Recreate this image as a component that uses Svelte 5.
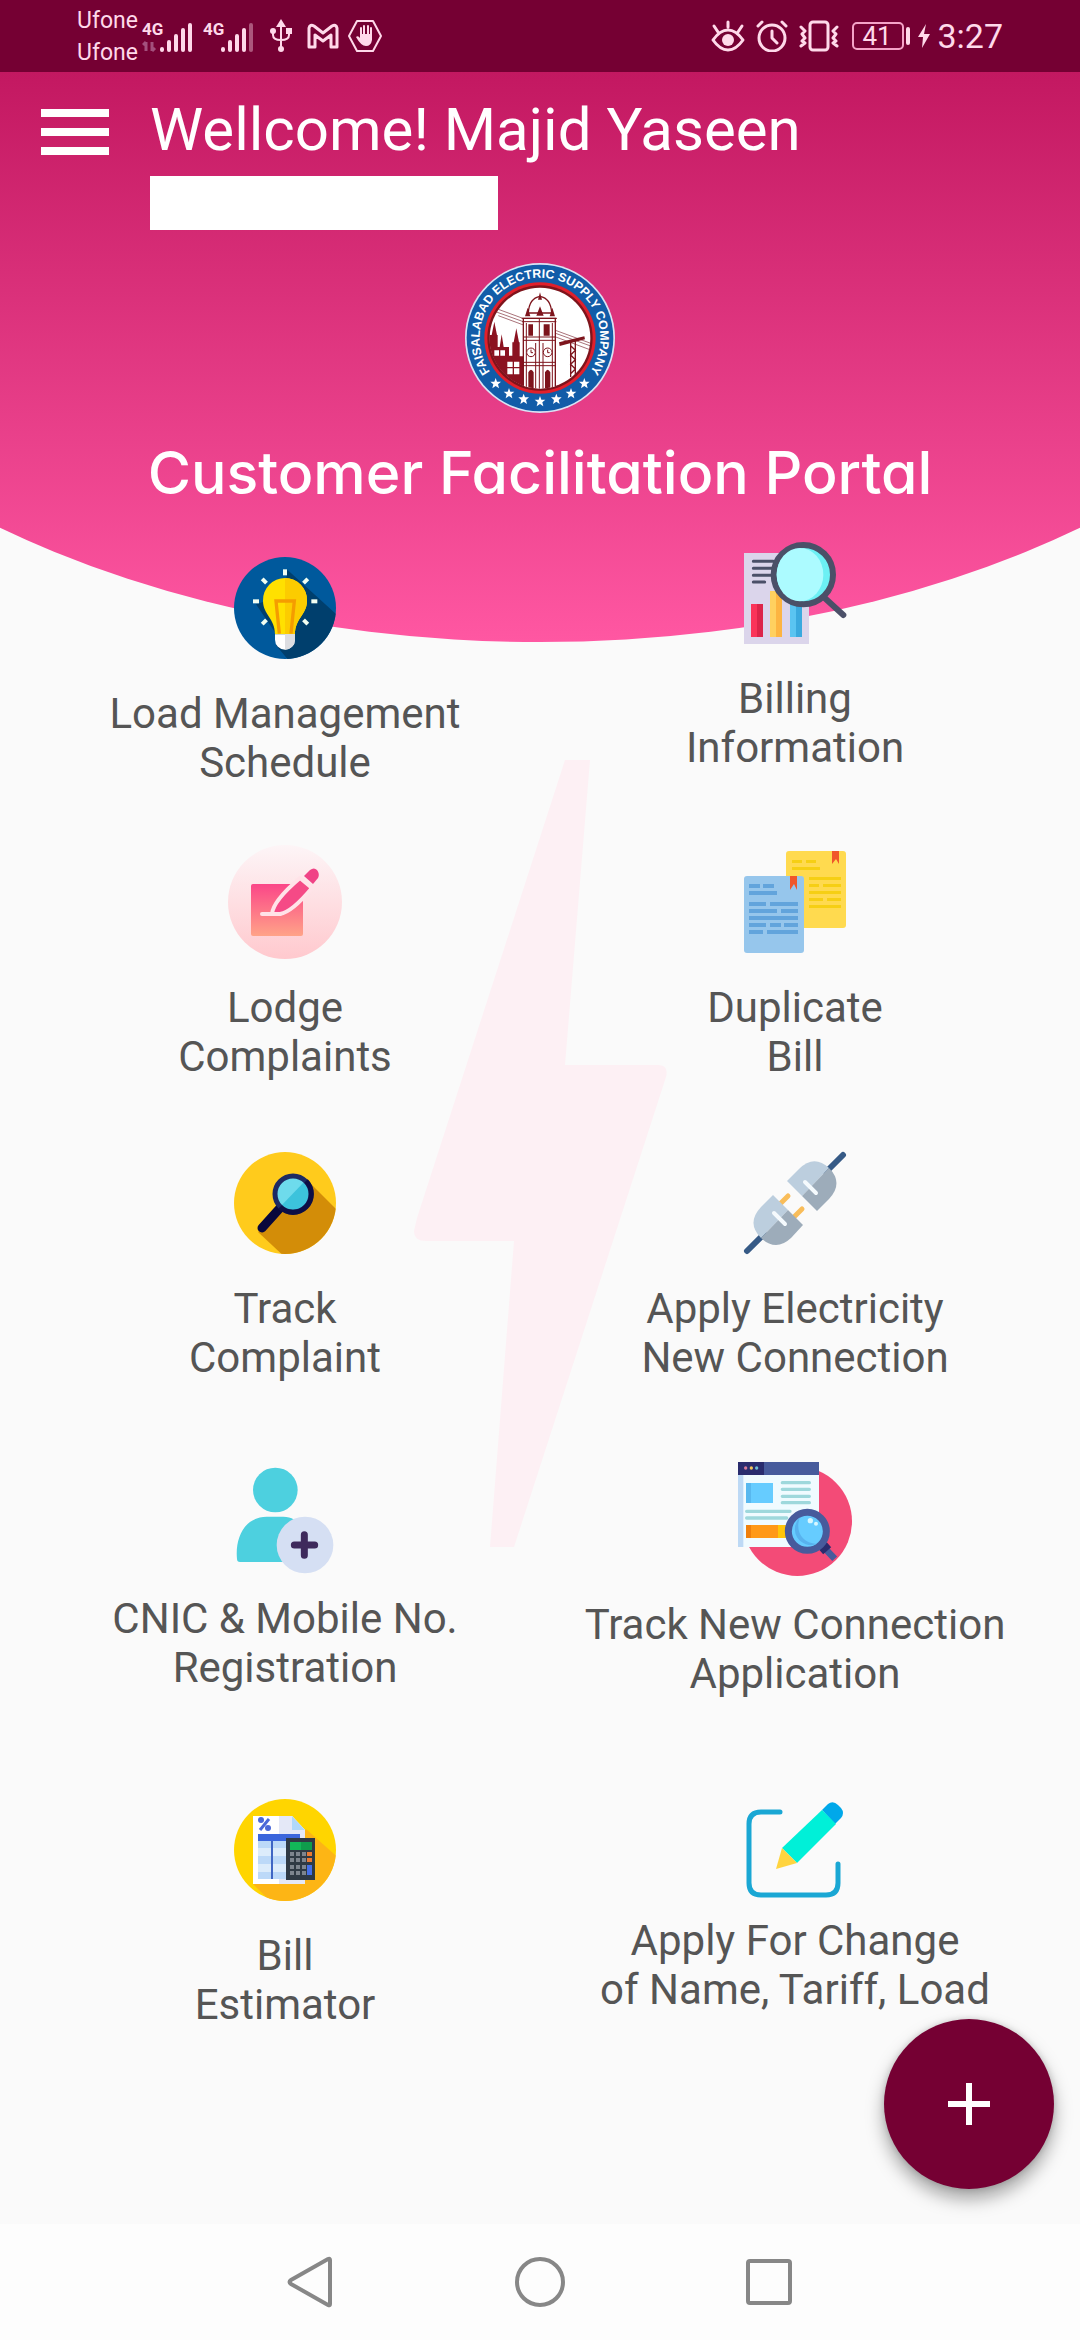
<script>
  const services = [
    { icon: 'bulb', label: 'Load Management\nSchedule', mod: 'lowered' },
    { icon: 'report', label: 'Billing\nInformation' },
    { icon: 'note', label: 'Lodge\nComplaints' },
    { icon: 'copies', label: 'Duplicate\nBill' },
    { icon: 'search', label: 'Track\nComplaint' },
    { icon: 'plug', label: 'Apply Electricity\nNew Connection' },
    { icon: 'person', label: 'CNIC & Mobile No.\nRegistration', mod: 'snug' },
    { icon: 'webpage', label: 'Track New Connection\nApplication' },
    { icon: 'calc', label: 'Bill\nEstimator' },
    { icon: 'pencil', label: 'Apply For Change\nof Name, Tariff, Load', mod: 'tight' }
  ];

  const viewBoxes = {
    bulb: '84 62 342 342',
    report: '54 48 342 342',
    person: '84 66 342 342',
    webpage: '84 66 342 342'
  };

  // Rays round the bulb: x, y, rotation
  const rays = [
    [255, 126, 0], [317, 152, 45], [343, 213, 90], [317, 275, 135],
    [193, 275, 45], [168, 213, 90], [193, 152, 135]
  ];

  // Text bars on the two documents: x, y, width
  const blueBars = [
    [11, 39, 11], [25, 39, 11], [11, 46, 28], [11, 57, 17], [32, 57, 28], [11, 64, 28], [43, 64, 17],
    [11, 71, 49], [11, 78, 17], [32, 78, 11], [46, 78, 14], [11, 85, 14], [29, 85, 31]
  ];
  const yellowBars = [
    [54, 15, 10], [68, 15, 10], [54, 22, 28], [71, 32, 32], [71, 39, 10], [85, 39, 18],
    [71, 46, 32], [71, 53, 14], [89, 53, 14], [71, 60, 32]
  ];

  const keyColumns = [62, 68, 74];
  const keyRows = [59, 65, 72, 78];

  // Stars along the lower arc of the emblem
  const stars = [46, 61, 75, 90, 105, 119, 134].map((deg) => {
    const a = (deg * Math.PI) / 180;
    return { x: Math.round(225 + 191 * Math.cos(a)), y: Math.round(225 + 191 * Math.sin(a)) };
  });
</script>

<div class="screen">
  <div class="backdrop" aria-hidden="true"></div>
  <svg class="watermark" viewBox="0 0 256 788" aria-hidden="true">
    <path d="M151 0h25L151 305h93q11 0 8 12L100 787H76L100 481H12q-12 0-12-10l3-13z" fill="#fdf0f4" />
  </svg>

  <div class="status">
    <div class="carriers"><span>Ufone</span><span>Ufone</span></div>
    <svg class="sig" width="50" height="36" viewBox="0 0 50 36">
      <text x="0" y="17" class="net">4G</text>
      <path d="M4 33V24M1 27l3-3M10 24v9M13 30l-3 3" stroke="#a3507d" stroke-width="3" fill="none" />
      <path d="M20 32v-1M27 32v-8M34 32V18M41 32V12M48 32V7" class="bars" />
    </svg>
    <svg class="sig second" width="50" height="36" viewBox="0 0 50 36">
      <text x="0" y="17" class="net">4G</text>
      <path d="M20 32v-1M27 32v-8M34 32V18M41 32V12" class="bars" />
      <path d="M48 32V7" class="bars" opacity=".4" />
    </svg>
    <svg class="usb" width="22" height="34" viewBox="0 0 22 34">
      <path d="M11 5v25M3 12v4q0 5 8 5M19 12v4q0 5-8 5" fill="none" stroke="#ffd9ea" stroke-width="2" />
      <path d="M11 0l5 8H6z" fill="#ffd9ea" />
      <circle cx="11" cy="30" r="3" fill="#ffd9ea" /><circle cx="3" cy="12" r="3" fill="#ffd9ea" />
      <path d="M16 9h6v6h-6z" fill="#ffd9ea" />
    </svg>
    <svg class="mail" width="32" height="26" viewBox="0 0 32 26">
      <path d="M2 24V5q1-4 5-2l9 7 9-7q4-2 5 2v19h-6V12l-8 6-8-6v12z" fill="none" stroke="#ffd9ea" stroke-width="3" stroke-linejoin="round" />
    </svg>
    <svg class="hex" width="34" height="34" viewBox="0 0 34 34">
      <path d="M9 2h16l8 15-8 15H9L1 17z" fill="none" stroke="#ffd9ea" stroke-width="2" stroke-linejoin="round" />
      <path d="M13 17V9M16 17V7M20 17V7M23 18V9" stroke="#ffd9ea" stroke-width="2" stroke-linecap="round" />
      <path d="M12 15h12v6q-1 6-6 6-5 0-10-9 2-2 4 1z" fill="#ffd9ea" />
    </svg>

    <div class="right">
      <svg width="34" height="32" viewBox="0 0 34 32" class="line">
        <path d="M2 20q7-10 15-10t15 10q-7 10-15 10T2 20zM17 7V2M7 12L3 6M27 12l4-6" />
        <circle cx="17" cy="20" r="6" fill="#ffd9ea" stroke="none" />
      </svg>
      <svg width="32" height="32" viewBox="0 0 32 32" class="line">
        <circle cx="16" cy="18" r="13" /><path d="M16 11v7l5 5M2 6l4-4M30 6l-4-4" />
      </svg>
      <svg width="40" height="34" viewBox="0 0 40 34" class="line">
        <rect x="11" y="3" width="18" height="28" rx="3" />
        <path d="M2 8l4 4-3 3 3 4-3 3 3 2-4 3M38 8l-4 4 3 3-3 4 3 3-3 2 4 3" />
      </svg>
      <svg class="battery" width="78" height="30" viewBox="0 0 78 30">
        <rect x="1" y="2" width="50" height="26" rx="4" fill="none" stroke="#f5a3c8" stroke-width="2" />
        <path d="M56 8v14" stroke="#ffd9ea" stroke-width="4" stroke-linecap="round" />
        <path d="M74 3l-8 13h5l-1 11 8-14h-6z" fill="#ffd9ea" />
        <text x="25" y="24" text-anchor="middle" class="level">41</text>
      </svg>
      <time>3:27</time>
    </div>
  </div>

  <header>
    <div class="welcome">
      <button class="menu" aria-label="Open menu"><i></i><i></i><i></i></button>
      <div class="user">
        <p>Wellcome! Majid Yaseen</p>
        <div class="redacted"></div>
      </div>
    </div>

    <svg class="emblem" viewBox="0 0 450 450" role="img" aria-label="Faisalabad Electric Supply Company">
      <defs>
        <path id="ring" d="M79 332A181 181 0 1 1 371 332" />
        <clipPath id="disc"><circle cx="225" cy="225" r="152" /></clipPath>
      </defs>
      <circle cx="225" cy="225" r="225" fill="#d9e4f5" />
      <circle cx="225" cy="225" r="220" fill="#125ca8" />
      <circle cx="225" cy="225" r="167" fill="#e0202c" />
      <circle cx="225" cy="225" r="158" fill="#7d141c" />
      <circle cx="225" cy="225" r="151" fill="#fff" />
      <g clip-path="url(#disc)">
        <path d="M92 136L380 242M100 158L380 262M75 140L380 250" stroke="#7d2a35" stroke-width="2" fill="none" />
        <path d="M72 340V216h8l8-40 8 40h2v36h6l6-38 6 38h16v26h10v-40h4l8-42 8 42h2v42h22v110H80z" fill="#8b1220" />
        <path d="M88 262h14v16H88zM106 262h14v16h-14zM127 296h16v16h-16zM147 296h16v16h-16zM127 316h16v18h-16zM147 316h16v18h-16z" fill="#fff" />
        <path d="M175 380V166h96v214z" fill="#fff" stroke="#7d141c" stroke-width="4" />
        <path d="M190 150q2-44 35-50 33 6 35 50z" fill="#fff" stroke="#7d141c" stroke-width="4" />
        <path d="M225 88l-6 22h12zM188 134l-8 26h16zM262 134l-8 26h16zM225 130l-11 28h22z" fill="#7d141c" />
        <path d="M170 166h106M172 176h102M175 222h96M175 232h96M175 298h96M175 308h96M223 166v214M184 180v200M212 240v140M234 240v140M262 180v200" stroke="#7d141c" stroke-width="3" fill="none" />
        <path d="M190 184h14v34h-14zM236 184h18v34h-18zM190 328q8-16 16 0v50h-16zM240 328q8-16 16 0v50h-16z" fill="#7d141c" />
        <circle cx="198" cy="268" r="13" fill="#fff" stroke="#7d141c" stroke-width="3" />
        <circle cx="248" cy="268" r="13" fill="#fff" stroke="#7d141c" stroke-width="3" />
        <path d="M198 260v9h6M248 260v9h6" stroke="#7d141c" stroke-width="3" fill="none" />
        <path d="M282 238l76-18 2 9-76 20z" fill="#7d141c" />
        <path d="M317 236v106M331 232v110M317 248l14 14-14 14 14 14-14 14 14 14-14 14" stroke="#7d141c" stroke-width="4" fill="none" />
      </g>
      <text class="ring-text"><textPath href="#ring" startOffset="50%" text-anchor="middle">FAISALABAD ELECTRIC SUPPLY COMPANY</textPath></text>
      {#each stars as s}
        <path transform="translate({s.x} {s.y})" d="M0-17L4-6 16-6 7 2 10 14 0 7-10 14-7 2-16-6-4-6z" fill="#fff" />
      {/each}
    </svg>

    <h1>Customer Facilitation Portal</h1>
  </header>

  <main>
    {#each services as s}
      <button class="tile {s.mod ?? ''}">
        <svg class="icon" viewBox={viewBoxes[s.icon] ?? '0 0 114 114'} aria-hidden="true">
          {#if s.icon === 'bulb'}
            <defs><clipPath id="bulbDisc"><circle cx="255" cy="233" r="153" /></clipPath></defs>
            <circle cx="255" cy="233" r="153" fill="#00599c" />
            <g clip-path="url(#bulbDisc)" fill="#003f6d">
              <path d="M262 118l156 142v135H270l-42-50V310l-60-88 30-10 60-60z" />
            </g>
            <path d="M255 143a66 66 0 0 1 66 68c0 42-36 52-36 101h-60c0-49-36-59-36-101a66 66 0 0 1 66-68z" fill="#ffe000" />
            <path d="M255 143a66 66 0 0 1 66 68c0 42-36 52-36 101h-30z" fill="#fccc00" />
            <path d="M238 310l-10-98h55l-10 98" fill="none" stroke="#f59c00" stroke-width="10" />
            <path d="M225 312h60v16a30 30 0 0 1-60 0z" fill="#fff" />
            <path d="M255 312h30v16a30 30 0 0 1-30 30z" fill="#dcdde1" />
            {#each rays as [x, y, r]}
              <rect x="-6" y="-9" width="12" height="18" fill="#f2fff2" transform="translate({x} {y}) rotate({r})" />
            {/each}
          {:else if s.icon === 'report'}
            <path d="M72 99h195v273H72z" fill="#dbd5eb" />
            <path d="M100 124h60M100 145h60M100 166h60M100 186h34" stroke="#4b5068" stroke-width="9" stroke-linecap="round" />
            <path d="M93 252h36v99H93z" fill="#fa3459" /><path d="M111 252h18v99h-18z" fill="#dc2549" />
            <path d="M150 213h36v138h-36z" fill="#ffd05f" /><path d="M168 213h18v138h-18z" fill="#fdb441" />
            <path d="M210 240h36v111h-36z" fill="#5ac4f1" /><path d="M228 240h18v111h-18z" fill="#3aa9de" />
            <path d="M315 235l55 50" stroke="#4b5068" stroke-width="18" stroke-linecap="round" />
            <circle cx="250" cy="164" r="89" fill="#6cf0f4" stroke="#4b5068" stroke-width="18" />
            <ellipse cx="240" cy="164" rx="70" ry="80" fill="#acfbff" />
          {:else if s.icon === 'note'}
            <defs>
              <linearGradient id="noteBg" x1="0" y1="0" x2="0" y2="1"><stop offset="0" stop-color="#fdf5f7" /><stop offset="1" stop-color="#ffc9ce" /></linearGradient>
              <linearGradient id="notePaper" x1="0" y1="0" x2="0" y2="1"><stop offset="0" stop-color="#fb4688" /><stop offset="1" stop-color="#ffa388" /></linearGradient>
            </defs>
            <circle cx="57" cy="57" r="57" fill="url(#noteBg)" />
            <rect x="23" y="39" width="52" height="52" rx="2" fill="url(#notePaper)" />
            <path d="M44 69Q45 56 72 33L84 43Q64 67 52 69z" fill="#f54a86" stroke="#ffe3e8" stroke-width="4" stroke-linejoin="round" />
            <path d="M34 69h18" stroke="#ffe3e8" stroke-width="4" stroke-linecap="round" />
            <path d="M76 31l6-6q4-3 7 0 3 4 1 8l-5 6z" fill="#f04386" />
          {:else if s.icon === 'copies'}
            <rect x="48" y="6" width="60" height="77" rx="3" fill="#ffda4f" />
            {#each yellowBars as [x, y, w]}<rect {x} {y} width={w} height="3" fill="#f6cf14" />{/each}
            <path d="M94 6h7v13l-3-5-4 5z" fill="#f0562a" />
            <rect x="6" y="31" width="60" height="77" rx="3" fill="#96c6ec" />
            {#each blueBars as [x, y, w]}<rect {x} {y} width={w} height="4" fill="#62a4dc" />{/each}
            <path d="M52 31h7v14l-3-6-4 6z" fill="#f0562a" />
          {:else if s.icon === 'search'}
            <defs><clipPath id="searchDisc"><circle cx="57" cy="57" r="51" /></clipPath></defs>
            <circle cx="57" cy="57" r="51" fill="#ffcb1c" />
            <path d="M80 35l34 34v45H60L30 86z" fill="#d38d08" clip-path="url(#searchDisc)" />
            <path d="M52 62L34 82" stroke="#08083c" stroke-width="9" stroke-linecap="round" />
            <circle cx="65" cy="48" r="18" fill="#6edbec" />
            <path d="M77 35A18 18 0 1 1 52 61z" fill="#3cc3dc" />
            <circle cx="65" cy="48" r="18" fill="none" stroke="#1d2a63" stroke-width="5" />
            <path d="M78 35A18 18 0 0 1 52 61" fill="none" stroke="#0d0e45" stroke-width="5" />
          {:else if s.icon === 'plug'}
            <path d="M105 9L88 26M9 105l17-17" stroke="#365a86" stroke-width="6" stroke-linecap="round" />
            <path d="M50 50l-9 9M64 63l-9 9" stroke="#f9bd5a" stroke-width="5" stroke-linecap="round" />
            <path d="M49 35l12-12q15-15 30-1L64 50z" fill="#bccede" />
            <path d="M91 22q15 15 0 31L79 65 64 50z" fill="#9dacba" />
            <path d="M35 49L23 61q-15 16 0 31L50 64z" fill="#bccede" />
            <path d="M23 92q15 14 30 0l12-13-15-15z" fill="#9dacba" />
            <path d="M67 36l11 11M36 67l11 11" stroke="#f5fafd" stroke-width="4" stroke-linecap="round" />
          {:else if s.icon === 'person'}
            <circle cx="226" cy="150" r="67" fill="#4dd0df" />
            <path d="M120 366q-9 0-9-9c-6-60 20-126 89-127h50c60 2 80 60 60 136z" fill="#4dd0df" />
            <circle cx="315" cy="315" r="85" fill="#d5dff3" />
            <path d="M313 284v62M283 315h61" stroke="#3e2a5c" stroke-width="21" stroke-linecap="round" />
          {:else if s.icon === 'webpage'}
            <circle cx="262" cy="244" r="164" fill="#f34b77" />
            <path d="M84 104h243v217H84z" fill="#f0fbff" />
            <path d="M84 104h16v217H84z" fill="#bdd9f5" />
            <path d="M84 66h243v39H84z" fill="#475b9c" /><path d="M84 66h78v39H84z" fill="#2a2c6e" />
            <circle cx="107" cy="84" r="5" fill="#d77a9a" /><circle cx="124" cy="84" r="5" fill="#f5c55a" /><circle cx="140" cy="84" r="5" fill="#6fbfd5" />
            <path d="M108 129h81v60h-81z" fill="#66ccff" /><path d="M108 129h15v60h-15z" fill="#58b8ef" />
            <path d="M217 128h81M217 148h81M217 169h81M217 188h81M110 214h130M110 234h120" stroke="#9ed8dc" stroke-width="10" stroke-linecap="round" />
            <path d="M108 255h96v39h-96z" fill="#ff9917" /><path d="M108 255h15v39h-15z" fill="#f0800c" /><path d="M204 255h30v39h-30z" fill="#ffc60a" />
            <path d="M340 320l34 36" stroke="#475b9c" stroke-width="20" />
            <path d="M333 335l24-21" stroke="#2a2c6e" stroke-width="20" />
            <circle cx="292" cy="274" r="57" fill="#66ccff" stroke="#475b9c" stroke-width="21" />
            <path d="M270 232a48 48 0 0 0 50 80c-45-2-66-40-50-80z" fill="#58b2ee" />
            <circle cx="301" cy="242" r="8" fill="#d8f7ff" /><circle cx="318" cy="251" r="6" fill="#d8f7ff" />
          {:else if s.icon === 'calc'}
            <defs><clipPath id="calcDisc"><circle cx="57" cy="57" r="51" /></clipPath></defs>
            <circle cx="57" cy="57" r="51" fill="#ffd500" />
            <path d="M78 36l36 32v46H48L25 91z" fill="#fdb515" clip-path="url(#calcDisc)" />
            <path d="M25 23h39l13 14v54H25z" fill="#fff" />
            <path d="M51 23h13l13 14v54H51z" fill="#e4e8f7" />
            <path d="M64 23l13 14H64z" fill="#b0d8fa" />
            <path d="M32 37l9-11" stroke="#4a68d8" stroke-width="3" /><circle cx="33" cy="27" r="3" fill="#4a68d8" /><circle cx="40" cy="35" r="3" fill="#4a68d8" />
            <path d="M30 41h42v7H30z" fill="#3b66dc" />
            <path d="M30 48h42v38H30z" fill="#dcecfb" />
            <path d="M30 48h42v7H30zM30 63h42v8H30zM30 79h42v7H30z" fill="#bcd9f8" />
            <path d="M44 48v38" stroke="#3f66c4" stroke-width="2" />
            <path d="M58 45h29v42H58z" fill="#2f3a44" />
            <path d="M62 49h22v8H62z" fill="#12b858" /><path d="M73 49h11v8H73z" fill="#0f9d4c" />
            {#each keyRows as y}{#each keyColumns as x}<rect {x} {y} width="4" height="4" fill="#7d858e" />{/each}{/each}
            <path d="M79 59h5v4h-5zM79 65h5v4h-5z" fill="#ea7a33" /><path d="M79 72h5v10h-5z" fill="#4570e8" />
          {:else}
            <path d="M42 19H23q-12 0-12 12v59q0 12 12 12h65q12 0 12-12V71" fill="none" stroke="#1aa7d4" stroke-width="5" stroke-linecap="round" />
            <path d="M84 17l6-6q5-4 10 1l3 3q4 5 0 10l-6 6z" fill="#00a8ea" />
            <path d="M44 55l40-38 14 14-39 39z" fill="#00f0d8" />
            <path d="M44 55l15 15-21 6z" fill="#ffd43f" />
          {/if}
        </svg>
        <span>{s.label}</span>
      </button>
    {/each}
  </main>

  <button class="fab" aria-label="Add">
    <svg width="42" height="42" viewBox="0 0 42 42"><path d="M21 0v42M0 21h42" stroke="#fff" stroke-width="6" /></svg>
  </button>

  <nav aria-label="System">
    <button aria-label="Back"><svg width="50" height="52" viewBox="0 0 50 52"><path d="M44 4v44q0 2-2 1L5 28q-3-2 0-4L42 3q2-1 2 1z" /></svg></button>
    <button aria-label="Home"><svg width="50" height="52" viewBox="0 0 50 52"><circle cx="25" cy="26" r="23" /></svg></button>
    <button aria-label="Recent apps"><svg width="50" height="52" viewBox="0 0 50 52"><rect x="4" y="5" width="42" height="42" rx="2" /></svg></button>
  </nav>
</div>

<style>
  :global(body) { margin: 0; background: #fafafa; }

  .screen {
    position: relative;
    display: flex;
    flex-direction: column;
    min-height: 100vh;
    overflow: hidden;
    background: #fafafa;
    font-family: Roboto, "Liberation Sans", sans-serif;
    color: #555;
  }
  button { border: 0; padding: 0; background: none; color: inherit; font: inherit; }
  svg { display: block; flex: none; }

  .backdrop {
    position: absolute;
    inset: 72px 0 auto;
    height: 570px;
    background: linear-gradient(#c31861, #ff57a2);
    clip-path: ellipse(81% 94% at 50% 6%);
  }
  .watermark {
    position: absolute;
    top: 760px;
    left: 50%;
    width: 256px;
    margin-left: -126px;
  }

  .status {
    position: relative;
    display: flex;
    align-items: center;
    height: 72px;
    padding: 0 77px;
    background: #750033;
    color: #ffd9ea;
  }
  .carriers { display: flex; flex-direction: column; width: 65px; font-size: 23px; line-height: 32px; padding-top: 2px; }
  .second { margin-left: 11px; }
  .net { font-size: 17px; font-weight: 700; fill: #ffd9ea; }
  .bars { fill: none; stroke: #ffd9ea; stroke-width: 4; stroke-linecap: round; }
  .usb { margin-left: 17px; }
  .mail { margin-left: 15px; }
  .hex { margin-left: 9px; }
  .right { display: flex; align-items: center; gap: 11px; margin-left: auto; }
  .line { fill: none; stroke: #ffd9ea; stroke-width: 3; stroke-linecap: round; stroke-linejoin: round; }
  .battery { margin-left: 2px; }
  .level { font-size: 26px; fill: #ffd9ea; }
  time { margin-left: -4px; font-size: 34px; line-height: 40px; }

  header { position: relative; display: flex; flex-direction: column; align-items: center; }
  .welcome { display: flex; align-self: stretch; gap: 41px; padding: 23px 41px 0; }
  .menu { display: flex; flex-direction: column; gap: 11px; width: 68px; padding-top: 14px; }
  .menu i { height: 8px; background: #fff; }
  .user p { margin: 0; font-size: 60px; line-height: 70px; color: #fff; }
  .redacted { width: 348px; height: 54px; margin-top: 11px; background: #fff; }
  .emblem { width: 150px; height: 150px; margin-top: 33px; }
  .ring-text { font: 700 37px "Liberation Sans", Arial, sans-serif; fill: #fff; }
  h1 {
    margin: 24px 0 0;
    font: 500 59px/72px Inter, "Open Sans", sans-serif;
    font-feature-settings: "cv11";
    color: #fff;
  }

  main {
    position: relative;
    flex: 1;
    display: grid;
    grid-template-columns: 1fr 1fr;
    grid-template-rows: 309px 301px 316px 331px auto;
    align-items: start;
    margin-top: 27px;
    padding: 0 30px;
  }
  .tile { display: flex; flex-direction: column; align-items: center; gap: 24px; }
  .lowered { padding-top: 15px; }
  .snug { gap: 18px; }
  .tight { gap: 9px; }
  .icon { width: 114px; height: 114px; }
  .tile span { font-size: 42px; line-height: 49px; white-space: pre-line; text-align: center; }

  .fab {
    position: absolute;
    right: 26px;
    bottom: 151px;
    display: grid;
    place-items: center;
    width: 170px;
    height: 170px;
    border-radius: 50%;
    background: #750033;
    box-shadow: 0 10px 18px rgba(0, 0, 0, .35), 0 0 6px rgba(0, 0, 0, .15);
  }

  nav { position: relative; display: flex; justify-content: center; gap: 179px; height: 116px; background: #fdfdfd; }
  nav svg { fill: none; stroke: #878787; stroke-width: 4; }
</style>
